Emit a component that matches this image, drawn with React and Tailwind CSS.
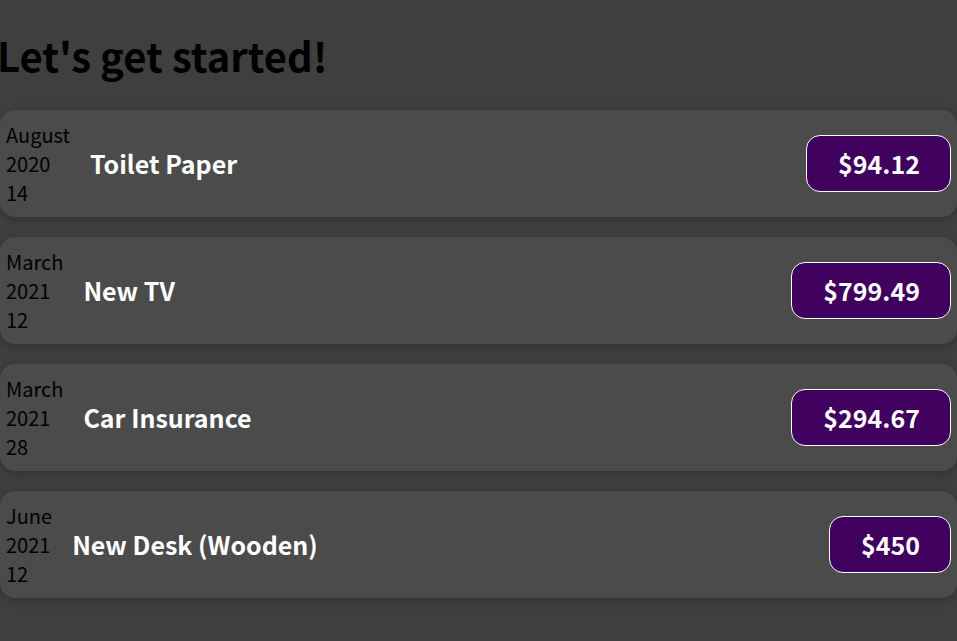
import React from 'react';

const expenses = [
  { id: 'e1', title: 'Toilet Paper', amount: '94.12', month: 'August', year: '2020', day: '14' },
  { id: 'e2', title: 'New TV', amount: '799.49', month: 'March', year: '2021', day: '12' },
  { id: 'e3', title: 'Car Insurance', amount: '294.67', month: 'March', year: '2021', day: '28' },
  { id: 'e4', title: 'New Desk (Wooden)', amount: '450', month: 'June', year: '2021', day: '12' },
];

const ExpenseItem = ({ expense }) => {
  return (
    <div className="flex items-center justify-between bg-[#4b4b4b] rounded-[15px] px-[6px] py-[10px] shadow-[0_2px_10px_rgba(0,0,0,0.25)]">
      {/* date stack */}
      <div className="text-[20px] leading-[29px] text-black">
        <div>{expense.month}</div>
        <div>{expense.year}</div>
        <div>{expense.day}</div>
      </div>
      <div className="flex-1 flex items-center">
        <h2 className="flex-1 mx-[20px] text-[25px] font-bold text-white">{expense.title}</h2>
        <div className="text-[25px] font-bold text-white bg-[#40005d] border border-white rounded-[14px] pl-[31px] pr-[30px] pt-[9px] pb-[10px] leading-[36px]">
          ${expense.amount}
        </div>
      </div>
    </div>
  );
};

export default function App() {
  return (
    <div
      className="min-h-screen bg-[#3f3f3f] overflow-hidden"
      style={{ fontFamily: '"Noto Sans CJK JP", "Noto Sans", sans-serif' }}
    >
      <h1 className="text-[40px] font-bold leading-[58px] text-black mt-[26px] mb-[26px] -ml-[3px]">
        Let's get started!
      </h1>
      <div className="flex flex-col gap-[20px]">
        {expenses.map((expense) => (
          <ExpenseItem key={expense.id} expense={expense} />
        ))}
      </div>
    </div>
  );
}
